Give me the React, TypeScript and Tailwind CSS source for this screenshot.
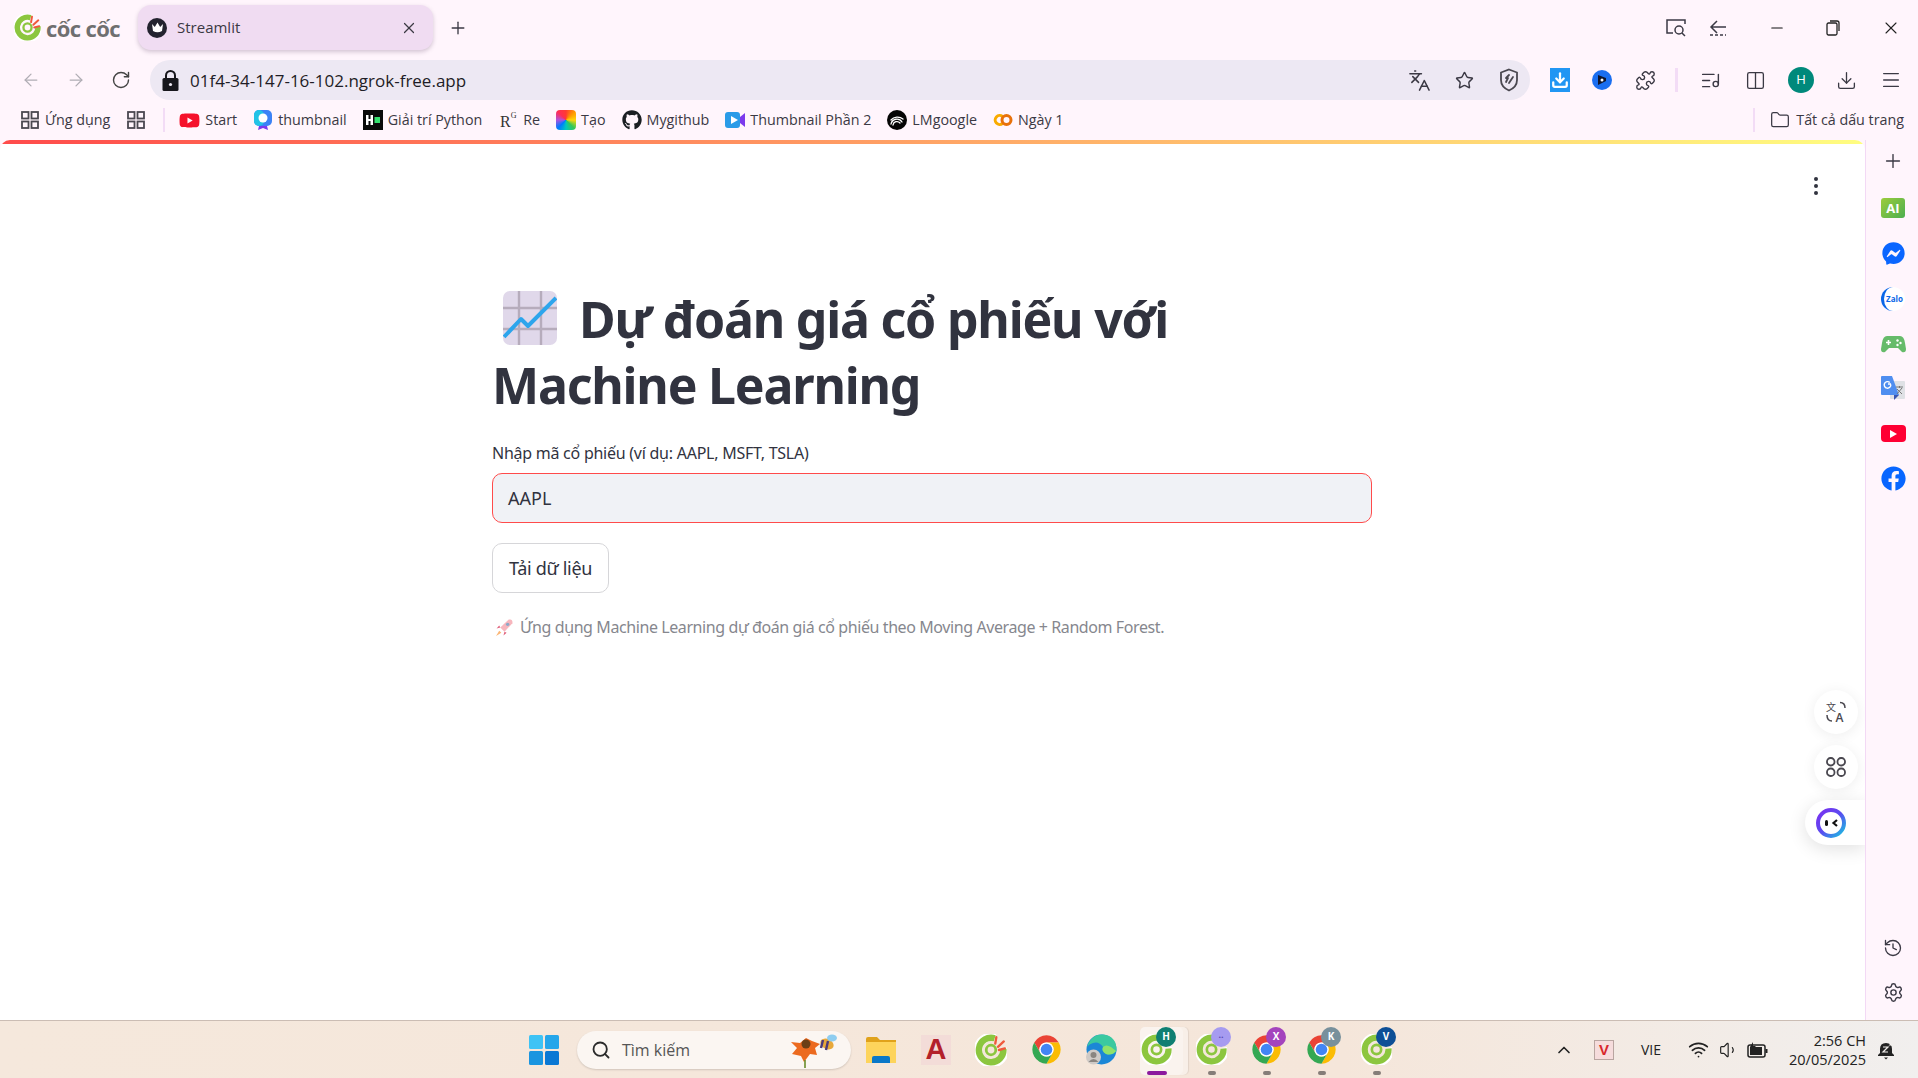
import React from 'react';
import {
  ArrowLeft, ArrowRight, RotateCw, Languages, Star, Puzzle, Columns2, Download, Menu, Plus, X, Minus,
  History, Settings, Folder, Search, ChevronUp, Wifi, Volume1, ListMusic,
} from 'lucide-react';
import { FaGithub, FaFacebook, FaFacebookMessenger, FaYoutube } from 'react-icons/fa';

const ui = "font-['Open_Sans','Noto_Sans',sans-serif]";
const st = "font-['Noto_Sans',sans-serif]";

const CocCoc = ({ size = 30, rays = false }: { size?: number; rays?: boolean }) => (
  <svg width={size} height={size} viewBox="0 0 30 30">
    <path d="M19 3.2 A12.5 12.5 0 1 0 27.6 13" fill="none" stroke="#fff" strokeWidth="8" />
    <path d="M18.5 4 A11.5 11.5 0 1 0 26.6 14" fill="none" stroke="#8cc63f" strokeWidth="6" />
    <circle cx="15" cy="15" r="4.5" fill="none" stroke="#8cc63f" strokeWidth="2.6" />
    {rays && (
      <g stroke="#ef5a3c" strokeWidth="2.2" strokeLinecap="round">
        <path d="M19 9 L20 3" />
        <path d="M21.5 12 L27 7" />
        <path d="M22.5 15 L28 13.5" />
      </g>
    )}
  </svg>
);

const Chrome = ({ size = 30 }: { size?: number }) => (
  <svg width={size} height={size} viewBox="0 0 48 48">
    <path d="M5 13 A22 22 0 0 1 43 13 H24 A11 11 0 0 0 14.5 29.5 Z" fill="#ea4335" />
    <path d="M43 13 A22 22 0 0 1 24 46 L33.5 29.5 A11 11 0 0 0 24 13 Z" fill="#fbbc04" />
    <path d="M24 46 A22 22 0 0 1 5 13 L14.5 29.5 A11 11 0 0 0 33.5 29.5 Z" fill="#34a853" />
    <circle cx="24" cy="24" r="11" fill="#fff" />
    <circle cx="24" cy="24" r="9" fill="#4285f4" />
  </svg>
);

const Badge = ({ label, bg }: { label: string; bg: string }) => (
  <span className={`absolute right-[2px] top-[-1px] flex h-[20px] w-[20px] items-center justify-center rounded-full text-[10px] font-bold text-white ${ui} ${bg}`}>
    {label}
  </span>
);

const Grid4 = () => (
  <svg width="18" height="18" viewBox="0 0 18 18" fill="none" stroke="#4a4850" strokeWidth="1.8">
    <rect x="1" y="1" width="6.5" height="6.5" />
    <rect x="10.5" y="1" width="6.5" height="6.5" />
    <rect x="1" y="10.5" width="6.5" height="6.5" />
    <rect x="10.5" y="10.5" width="6.5" height="6.5" />
  </svg>
);

const bookmarks: { icon: React.ReactNode; label: string }[] = [
  { icon: <FaYoutube size={21} color="#f5112b" />, label: 'Start' },
  {
    icon: (
      <svg width="20" height="22" viewBox="0 0 20 22">
        <rect x="1" y="1" width="18" height="16" rx="5" fill="#3b82f6" />
        <rect x="1" y="1" width="10" height="16" rx="5" fill="#22c3e6" />
        <circle cx="10" cy="9" r="4.5" fill="#fff" />
        <path d="M6 17 L5 21 L10 19 L15 21 L14 17 Z" fill="#7c3aed" />
      </svg>
    ),
    label: 'thumbnail',
  },
  {
    icon: (
      <svg width="20" height="20" viewBox="0 0 20 20">
        <rect width="20" height="20" fill="#0a0a0a" />
        <path d="M3 5 H5.5 V9 H7.5 V5 H10 V15 H7.5 V11 H5.5 V15 H3 Z" fill="#fff" />
        <rect x="11.5" y="7" width="5.5" height="6" fill="#35e06f" />
      </svg>
    ),
    label: 'Giải trí Python',
  },
  {
    icon: (
      <span className="flex h-[20px] w-[20px] items-start justify-center font-['Liberation_Serif',serif] text-[16px] leading-[24px] text-[#333]">
        R<span className="text-[8px] leading-[12px]">G</span>
      </span>
    ),
    label: 'Re',
  },
  {
    icon: (
      <span className="h-[20px] w-[20px] rounded-[4px] bg-[conic-gradient(#ff3b30,#ff9500,#ffd60a,#34c759,#00c7be,#007aff,#af52de,#ff2d55,#ff3b30)]" />
    ),
    label: 'Tạo',
  },
  { icon: <FaGithub size={20} color="#1b1f23" />, label: 'Mygithub' },
  {
    icon: (
      <svg width="20" height="20" viewBox="0 0 20 20">
        <rect x="0" y="2" width="15" height="16" rx="3" fill="#2a9be8" />
        <path d="M15 7 L20 3 V17 L15 13 Z" fill="#7c3aed" />
        <path d="M6 6 L13 10 L6 14 Z" fill="#fff" />
      </svg>
    ),
    label: 'Thumbnail Phần 2',
  },
  {
    icon: (
      <svg width="20" height="20" viewBox="0 0 20 20" fill="none">
        <circle cx="10" cy="10" r="10" fill="#050505" />
        <g stroke="#fff" strokeWidth="1.3" strokeLinecap="round">
          <path d="M4 14 A6 6 0 0 1 15 12" />
          <path d="M6 15 A4 4 0 0 1 13 13" />
          <path d="M4 10 A8 7 0 0 1 16 9" />
        </g>
      </svg>
    ),
    label: 'LMgoogle',
  },
  {
    icon: (
      <svg width="20" height="20" viewBox="0 0 20 20" fill="none" strokeWidth="3">
        <path d="M9.5 6.5 A4.5 4.5 0 1 0 9.5 13.5" stroke="#f9ab00" />
        <circle cx="13.5" cy="10" r="4.5" stroke="#e8710a" />
      </svg>
    ),
    label: 'Ngày 1',
  },
];

const SideSlot = ({ children }: { children: React.ReactNode }) => (
  <div className="flex h-[45px] items-center justify-center">{children}</div>
);

const BrowserChrome = () => (
  <div className={`shrink-0 bg-[#fff5fc] text-[#3b3944] ${ui}`}>
    {/* hang tab */}
    <div className="flex h-[60px] items-start pt-[5px]">
      <div className="flex h-[45px] w-[138px] items-center pl-[14px]">
        <CocCoc size={27} rays />
        <span className="ml-[5px] text-[22px] font-bold leading-none tracking-[-0.6px] text-[#6f6f70]">cốc cốc</span>
      </div>
      <div className="flex h-[45px] w-[295px] items-center rounded-[13px] bg-[#f0dcf2] pl-[9px] pr-[15px] shadow-[0_2px_4px_rgba(80,50,90,0.25)]">
        <span className="flex h-[20px] w-[20px] items-center justify-center rounded-full bg-[#23232f]">
          <svg width="13" height="11" viewBox="0 0 13 11">
            <path d="M1 2 L3.8 5 L6.5 0.5 L9.2 5 L12 2 L11 9 Q6.5 11.5 2 9 Z" fill="#fff" />
          </svg>
        </span>
        <span className="ml-[10px] flex-1 text-[15px]">Streamlit</span>
        <X size={18} strokeWidth={1.6} />
      </div>
      <div className="ml-[15px] flex h-[45px] items-center">
        <Plus size={20} strokeWidth={1.6} />
      </div>
      <div className="ml-auto flex h-[45px] items-center pr-[17px]">
        <svg width="22" height="20" viewBox="0 0 22 20" fill="none" stroke="#3b3944" strokeWidth="1.5">
          <path d="M8 15 H2 V2 H20 V6" />
          <circle cx="14" cy="12" r="4" />
          <path d="M17 15 L20 18" />
        </svg>
        <svg className="ml-[21px]" width="20" height="20" viewBox="0 0 20 20" fill="none" stroke="#3b3944" strokeWidth="1.5">
          <path d="M9 3 L3 9 L9 15 M3 9 H18" />
          <path d="M2 17 H18" strokeDasharray="3 2" />
        </svg>
        <Minus className="ml-[40px]" size={18} strokeWidth={1.4} color="#111" />
        <svg className="ml-[40px]" width="14" height="16" viewBox="0 0 14 16" fill="none" stroke="#222" strokeWidth="1.3">
          <rect x="1" y="3" width="10" height="12" rx="1.5" />
          <path d="M4 1 H11 Q13 1 13 3 V11" />
        </svg>
        <X className="ml-[41px]" size={20} strokeWidth={1.3} color="#222" />
      </div>
    </div>

    {/* thanh dia chi */}
    <div className="flex h-[40px] items-center">
      <div className="flex w-[150px] items-center pl-[21px]">
        <ArrowLeft size={20} strokeWidth={1.5} color="#b0adb4" />
        <ArrowRight className="ml-[25px]" size={20} strokeWidth={1.5} color="#b0adb4" />
        <RotateCw className="ml-[25px]" size={20} strokeWidth={1.7} color="#444" />
      </div>
      <div className="flex h-[40px] w-[1380px] items-center rounded-full bg-[#ede8f3] pl-[12px] pr-[11px]">
        <svg width="17" height="21" viewBox="0 0 17 21">
          <path d="M4 9 V5.5 A4.5 4.5 0 0 1 13 5.5 V9" fill="none" stroke="#17171c" strokeWidth="2" />
          <rect x="0.5" y="8" width="16" height="13" rx="1.5" fill="#17171c" />
          <circle cx="8.5" cy="14.5" r="1.6" fill="#ede8f3" />
        </svg>
        <span className="ml-[11px] flex-1 text-[17px] leading-none text-[#1f1d26]">01f4-34-147-16-102.ngrok-free.app</span>
        <Languages size={23} strokeWidth={1.6} />
        <Star className="ml-[24px]" size={19} strokeWidth={1.8} />
        <svg className="ml-[25px]" width="20" height="24" viewBox="0 0 20 24" fill="none" stroke="#4a4850" strokeWidth="1.8">
          <path d="M10 1.5 L18 4.5 V12 Q18 19 10 22.5 Q2 19 2 12 V4.5 Z" />
          <path d="M7 14 L9 10 M10 15 L14 9 M7 10 L10 7" strokeLinecap="round" />
        </svg>
      </div>
      <span className="ml-[20px] flex h-[24px] w-[20px] flex-col items-center justify-center bg-[#2196f3]">
        <Download size={18} color="#fff" strokeWidth={3} />
      </span>
      <span className="ml-[22px] flex h-[20px] w-[20px] items-center justify-center rounded-full bg-[#1a6ef0]">
        <svg width="10" height="10" viewBox="0 0 10 10">
          <path d="M1 0 V10 L9 6 V3 Z" fill="#10162b" />
          <circle cx="5" cy="5" r="1.5" fill="#fff" />
        </svg>
      </span>
      <Puzzle className="ml-[23px]" size={21} strokeWidth={1.6} />
      <span className="ml-[19px] h-[24px] w-[3px] bg-[#f3dcf6]" />
      <ListMusic className="ml-[22px]" size={21} strokeWidth={1.6} />
      <Columns2 className="ml-[24px]" size={21} strokeWidth={1.5} />
      <span className="ml-[22px] flex h-[26px] w-[26px] items-center justify-center rounded-full bg-[#00897b] text-[13px] text-white">H</span>
      <Download className="ml-[22px]" size={21} strokeWidth={1.5} />
      <Menu className="ml-[23px]" size={22} strokeWidth={1.5} />
    </div>

    {/* bookmark */}
    <div className="flex h-[40px] items-center text-[14.3px] leading-none">
      <div className="flex items-center pl-[21px]">
        <Grid4 />
        <span className="ml-[6px]">Ứng dụng</span>
        <span className="ml-[17px]"><Grid4 /></span>
        <span className="ml-[18px] h-[24px] w-[2px] bg-[#f3dcf6]" />
      </div>
      <div className="ml-[14px] flex items-center gap-[16px]">
        {bookmarks.map((b) => (
          <div key={b.label} className="flex items-center gap-[5px]">
            {b.icon}
            <span>{b.label}</span>
          </div>
        ))}
      </div>
      <div className="ml-auto flex items-center pr-[14px]">
        <span className="h-[24px] w-[2px] bg-[#f3dcf6]" />
        <Folder className="ml-[15px]" size={20} strokeWidth={1.5} />
        <span className="ml-[6px]">Tất cả dấu trang</span>
      </div>
    </div>
  </div>
);

const StreamlitPage = () => (
  <div className="relative h-[880px] flex-1 overflow-hidden rounded-t-[10px] bg-white">
    <div className="h-[4px] bg-[linear-gradient(90deg,#ff4b4b,#fffd80)]" />

    {/* menu 3 cham */}
    <div className="absolute left-[1814px] top-[37px] flex flex-col gap-[3px]">
      {[0, 1, 2].map((i) => (
        <span key={i} className="h-[4px] w-[4px] rounded-full bg-[#31333f]" />
      ))}
    </div>

    <main className={`ml-[492px] w-[880px] pt-[142px] text-[#31333f] ${st}`}>
      <h1 className="whitespace-nowrap text-[50px] font-bold leading-[66px] tracking-[-1.2px]">
        <svg className="ml-[11px] mr-[22px] inline-block align-[-7px]" width="54" height="54" viewBox="0 0 54 54">
          <rect width="54" height="54" rx="7" fill="#e0d8ea" />
          <g stroke="#b6acbc" strokeWidth="2.4">
            <path d="M16 0 V54 M38 0 V54 M0 17 H54 M0 38 H54" />
          </g>
          <path d="M1 46 L18 28 L25 35 L53 7" fill="none" stroke="#2da5ec" strokeWidth="4" strokeLinejoin="round" />
        </svg>
        Dự đoán giá cổ phiếu với
        <br />
        Machine Learning
      </h1>

      <label className="mt-[23px] block text-[16px] leading-[25px] tracking-[-0.25px]">Nhập mã cổ phiếu (ví dụ: AAPL, MSFT, TSLA)</label>
      <div className="mt-[7px] flex h-[50px] items-center rounded-[10px] border border-[#ff4b4b] bg-[#f0f2f6] pl-[15px] text-[18px]">AAPL</div>

      <button className="mt-[20px] flex h-[50px] w-[117px] items-center justify-center rounded-[10px] border border-[#d6d6d9] bg-white text-[18px] tracking-[-0.3px]">
        Tải dữ liệu
      </button>

      <div className="mt-[21px] flex items-center text-[16px] leading-[26px] tracking-[-0.41px] text-[#86878e]">
        <svg className="ml-[3px] mr-[6px]" width="19" height="19" viewBox="0 0 18 18">
          <path d="M5 9 L13 1.5 Q17 0.5 16.5 5 L9 13 Z" fill="#f7b6bd" />
          <path d="M5 9 L1.5 10 L4 7 Z M9 13 L8 16.5 L11 14 Z" fill="#e0607c" />
          <circle cx="12" cy="6" r="1.6" fill="#8aa9c9" />
          <path d="M4 12 L1 17 L6 14 Z" fill="#fbb574" />
        </svg>
        Ứng dụng Machine Learning dự đoán giá cổ phiếu theo Moving Average + Random Forest.
      </div>
    </main>

    {/* nut noi cua trinh duyet */}
    <div className="absolute left-[1814px] top-[550px] flex h-[44px] w-[44px] items-center justify-center rounded-full bg-white shadow-[0_2px_14px_rgba(0,0,0,0.07)]">
      <svg width="26" height="26" viewBox="0 0 26 26" fill="none" stroke="#4a4850" strokeWidth="1.5">
        <text x="3" y="12" fontSize="10" fill="#4a4850" stroke="none" fontFamily="'Noto Sans CJK SC',sans-serif">文</text>
        <text x="12.5" y="22.5" fontSize="12" fontWeight="600" fill="#4a4850" stroke="none" fontFamily="'Open Sans',sans-serif">A</text>
        <path d="M17 3.5 Q22 3.5 22 9" />
        <path d="M4 16 Q4 22 9 22" />
      </svg>
    </div>
    <div className="absolute left-[1814px] top-[605px] flex h-[44px] w-[44px] items-center justify-center rounded-full bg-white shadow-[0_2px_14px_rgba(0,0,0,0.07)]">
      <svg width="20" height="20" viewBox="0 0 20 20" fill="none" stroke="#4a4850" strokeWidth="1.8">
        <rect x="1" y="1" width="7.5" height="7.5" rx="3.5" />
        <rect x="11.5" y="1" width="7.5" height="7.5" rx="3.5" />
        <rect x="1" y="11.5" width="7.5" height="7.5" rx="3.5" />
        <rect x="11.5" y="11.5" width="7.5" height="7.5" rx="3.5" />
      </svg>
    </div>
    <div className="absolute left-[1805px] top-[660px] flex h-[45px] w-[60px] items-center rounded-l-full bg-white pl-[11px] shadow-[0_4px_18px_rgba(0,0,0,0.12)]">
      <svg width="30" height="30" viewBox="0 0 30 30" fill="none">
        <defs>
          <linearGradient id="botRing" x1="0" y1="0" x2="1" y2="1">
            <stop offset="0" stopColor="#7b2ff0" />
            <stop offset="0.5" stopColor="#5a4cf0" />
            <stop offset="1" stopColor="#19c3e0" />
          </linearGradient>
        </defs>
        <circle cx="15" cy="15" r="13" stroke="url(#botRing)" strokeWidth="4" />
        <rect x="9" y="12" width="3" height="6" rx="1.5" fill="#111" />
        <path d="M21 12 L17.5 15 L21 18" stroke="#111" strokeWidth="2.2" />
      </svg>
    </div>
  </div>
);

const SideBar = () => (
  <aside className="flex w-[53px] shrink-0 flex-col border-l border-[#f3d9f5] bg-[#fff5fc] pl-[2px]">
    <div className="flex h-[41px] items-center justify-center"><Plus size={22} strokeWidth={1.5} color="#3b3944" /></div>
    <div className="mt-[5px]">
      <div className="flex h-[44px] items-center justify-center">
        <span className="flex h-[20px] w-[24px] items-center justify-center rounded-[3px] bg-[linear-gradient(135deg,#9ccc3c,#4caf50)] font-['Open_Sans',sans-serif] text-[13px] font-bold leading-none text-white">AI</span>
      </div>
      <div className="mt-[1px]">
        <SideSlot><FaFacebookMessenger size={23} color="#0a66ff" /></SideSlot>
      </div>
      <SideSlot>
        <span className="flex h-[24px] w-[24px] items-center justify-center rounded-full border-l-[3px] border-[#0a66e8] bg-white font-['Open_Sans',sans-serif] text-[8px] font-bold leading-none text-[#0a66e8]">Zalo</span>
      </SideSlot>
      <SideSlot>
        <svg width="25" height="18" viewBox="0 0 25 18">
          <path d="M6 1 H19 Q23 1 24 8 L25 14 Q25 18 21 17 L17 13 H8 L4 17 Q0 18 0 14 L1 8 Q2 1 6 1 Z" fill="#66bb6a" />
          <path d="M5 7.5 H10 M7.5 5 V10" stroke="#fff" strokeWidth="1.6" />
          <circle cx="16.5" cy="5.5" r="1.2" fill="#fff" />
          <circle cx="19.5" cy="8" r="1.2" fill="#fff" />
          <circle cx="16.5" cy="10" r="1.2" fill="#fff" />
        </svg>
      </SideSlot>
      <SideSlot>
        <svg width="24" height="25" viewBox="0 0 24 25">
          <rect x="9" y="5" width="15" height="18" rx="1" fill="#dfe1e5" />
          <path d="M1 0 H11 L18 19 H1 Q0 19 0 18 V1 Q0 0 1 0 Z" fill="#4f8ef0" />
          <path d="M13 19 H18 L13 24 Z" fill="#3a56b0" />
          <path d="M10 8 H7 M9.8 8.5 A3.3 3.3 0 1 1 8.8 6.5" fill="none" stroke="#fff" strokeWidth="1.4" />
          <path d="M15 11 H22 M18.5 10 V12 M16 18 L21 12 M16 13 L21 18" stroke="#777" strokeWidth="1" />
        </svg>
      </SideSlot>
      <SideSlot>
        <span className="flex h-[17px] w-[25px] items-center justify-center rounded-[4px] bg-[#ff0033]">
          <span className="h-0 w-0 border-y-[4.5px] border-l-[7px] border-y-transparent border-l-white" />
        </span>
      </SideSlot>
      <SideSlot><FaFacebook size={25} color="#0866ff" /></SideSlot>
    </div>
    <div className="mt-auto pb-[5px]">
      <SideSlot><History size={20} strokeWidth={1.6} color="#3b3944" /></SideSlot>
      <SideSlot><Settings size={21} strokeWidth={1.6} color="#3b3944" /></SideSlot>
    </div>
  </aside>
);

const Slot = ({ children, indicator, active }: { children: React.ReactNode; indicator?: boolean; active?: boolean }) => (
  <div className="relative flex h-[58px] w-[55px] items-center justify-center">
    {active && (
      <>
        <span className="absolute left-[16px] top-[6px] h-[48px] w-[43px] rounded-[5px] bg-[#f8efe8] shadow-[1px_0_1px_rgba(0,0,0,0.08)]" />
        <span className="absolute left-[11px] top-[6px] h-[48px] w-[43px] rounded-[5px] bg-[#faf3ee]" />
        <span className="absolute left-[18px] top-[50px] h-[4px] w-[20px] rounded-full bg-[#8b1a9e]" />
      </>
    )}
    {indicator && <span className="absolute left-[24px] top-[50px] h-[4px] w-[8px] rounded-full bg-[#857d78]" />}
    <span className="relative flex">{children}</span>
  </div>
);

const Profile = ({ children, label, bg, active }: { children: React.ReactNode; label?: string; bg: string; active?: boolean }) => (
  <Slot indicator={!active} active={active}>
    <span className="relative flex h-[44px] w-[44px] items-center justify-center">
      {children}
      {label ? (
        <Badge label={label} bg={bg} />
      ) : (
        <span className={`absolute right-[2px] top-[-1px] flex h-[20px] w-[20px] items-center justify-center rounded-full text-[9px] font-bold text-[#5b4bb5] ${bg}`}>··</span>
      )}
    </span>
  </Slot>
);

const TaskBar = () => (
  <div className={`flex h-[58px] shrink-0 items-center border-t border-[#cbbdb4] bg-[linear-gradient(90deg,#f5e8dc,#f5e6da_70%,#f1efee)] pl-[516.5px] text-[#222] ${ui}`}>
    <Slot>
      <svg width="30" height="30" viewBox="0 0 30 30">
        <rect x="0" y="0" width="14" height="14" rx="1.5" fill="#3ec3f5" />
        <rect x="16" y="0" width="14" height="14" rx="1.5" fill="#25a6ea" />
        <rect x="0" y="16" width="14" height="14" rx="1.5" fill="#1a95e0" />
        <rect x="16" y="16" width="14" height="14" rx="1.5" fill="#0a78d4" />
      </svg>
    </Slot>
    <div className="ml-[5.5px] flex h-[38px] w-[274px] items-center rounded-full bg-[#fbf6f2] pl-[14px] shadow-[0_1px_2px_rgba(0,0,0,0.15)]">
      <Search size={20} strokeWidth={2.2} color="#2b2b2b" />
      <span className="ml-[11px] w-[70px] text-[16px] text-[#555]">Tìm kiếm</span>
      <svg className="ml-[98px]" width="48" height="36" viewBox="0 0 48 36">
        <path d="M16 6 L22 9 L30 12 L25 16 L27 23 L20 22 L14 30 L11 24 L2 22 L7 16 L1 10 L10 11 Z" fill="#ec6a1f" />
        <circle cx="16" cy="12" r="4.5" fill="#6b3f16" />
        <path d="M15 28 V36" stroke="#6a8c2a" strokeWidth="1.6" />
        <ellipse cx="37" cy="12" rx="7" ry="5" fill="#e8a83a" transform="rotate(25 37 12)" />
        <path d="M33 8 L31 16 M38 9 L36 18" stroke="#4b3a7c" strokeWidth="2.4" />
        <ellipse cx="42" cy="6" rx="5" ry="3.5" fill="#8ecdf0" />
      </svg>
    </div>
    <div className="ml-[2.5px] flex items-center">
      <Slot>
        <svg width="30" height="28" viewBox="0 0 30 28">
          <path d="M0 3 Q0 1 2 1 H11 L14 4 H30 V27 H0 Z" fill="#e0a21b" />
          <rect y="6" width="30" height="21" fill="#fdd45c" />
          <path d="M6 27 V22 Q6 20 8 20 H22 Q24 20 24 22 V27 Z" fill="#0a78c8" />
        </svg>
      </Slot>
      <Slot>
        <span className="flex h-[30px] w-[30px] items-center justify-center bg-[#f3dcd8] font-['Liberation_Sans',sans-serif] text-[29px] font-bold leading-none text-[#b3202a]">A</span>
      </Slot>
      <Slot><CocCoc size={32} rays /></Slot>
      <Slot><Chrome size={31} /></Slot>
      <Slot>
        <svg width="31" height="31" viewBox="0 0 31 31">
          <circle cx="15.5" cy="15.5" r="15" fill="#1b87d6" />
          <path d="M1 13 Q5 0 17 0.5 Q31 2 30.5 17 Q26 22 20 20 Q15 17 17 13 Q13 7 7 9 Q3 10 1 13 Z" fill="#3bc9a0" />
          <path d="M17 13 Q20 10 25 13 L30 17 Q26 22 20 20 Q15 17 17 13 Z" fill="#8fe26a" />
          <circle cx="7.5" cy="23" r="7.5" fill="#cfcac6" />
          <circle cx="7.5" cy="21" r="3" fill="#8a8580" />
          <path d="M2.5 28 Q7.5 22 12.5 28" fill="#8a8580" />
        </svg>
      </Slot>
      <Profile label="H" bg="bg-[#0f7f72]" active><CocCoc size={31} /></Profile>
      <Profile bg="bg-[#a69bf0]"><CocCoc size={31} /></Profile>
      <Profile label="X" bg="bg-[#a444bd]"><Chrome size={31} /></Profile>
      <Profile label="K" bg="bg-[#78909c]"><Chrome size={31} /></Profile>
      <Profile label="V" bg="bg-[#0d4f96]"><CocCoc size={31} /></Profile>
    </div>

    <div className="ml-auto flex items-center pr-[23px]">
      <ChevronUp size={20} strokeWidth={2} />
      <span className="ml-[20px] flex h-[20px] w-[20px] items-center justify-center border border-[#b9a5a0] bg-[#f6dcdc] font-['Liberation_Sans',sans-serif] text-[15px] font-bold leading-none text-[#d8262c]">V</span>
      <span className="ml-[27px] w-[26px] text-[14px]">VIE</span>
      <Wifi className="ml-[21px]" size={21} strokeWidth={2} />
      <Volume1 className="ml-[10px]" size={20} strokeWidth={1.4} />
      <svg className="ml-[8px]" width="21" height="16" viewBox="0 0 21 16">
        <rect x="1" y="3" width="17" height="12" rx="2" fill="none" stroke="#222" strokeWidth="1.5" />
        <rect x="3" y="5" width="12" height="8" fill="#222" />
        <rect x="18.5" y="7" width="2" height="4" fill="#222" />
        <path d="M6 0 L3 5 H6 L4 9 L9 4 H6 Z" fill="#222" />
      </svg>
      <div className="ml-[10px] w-[88px] text-right text-[14.5px] leading-[19px]">
        <div>2:56 CH</div>
        <div>20/05/2025</div>
      </div>
      <svg className="ml-[11px]" width="18" height="20" viewBox="0 0 18 20">
        <path d="M9 3 Q3 3 3 9 V13 L1 15 V16 H17 V15 L15 13 V9 Q15 3 9 3 Z" fill="#222" />
        <path d="M7 17.5 H11 L9 19.5 Z" fill="#222" />
        <path d="M6 7 H11 L6 12 H11 M13 1 H17 L13 5 H17" fill="none" stroke="#f2efed" strokeWidth="1.2" />
      </svg>
    </div>
  </div>
);

export default function App() {
  return (
    <div className="flex h-[1078px] w-[1918px] flex-col overflow-hidden bg-[#fff5fc]">
      <BrowserChrome />
      <div className="flex h-[880px] shrink-0">
        <StreamlitPage />
        <SideBar />
      </div>
      <TaskBar />
    </div>
  );
}
